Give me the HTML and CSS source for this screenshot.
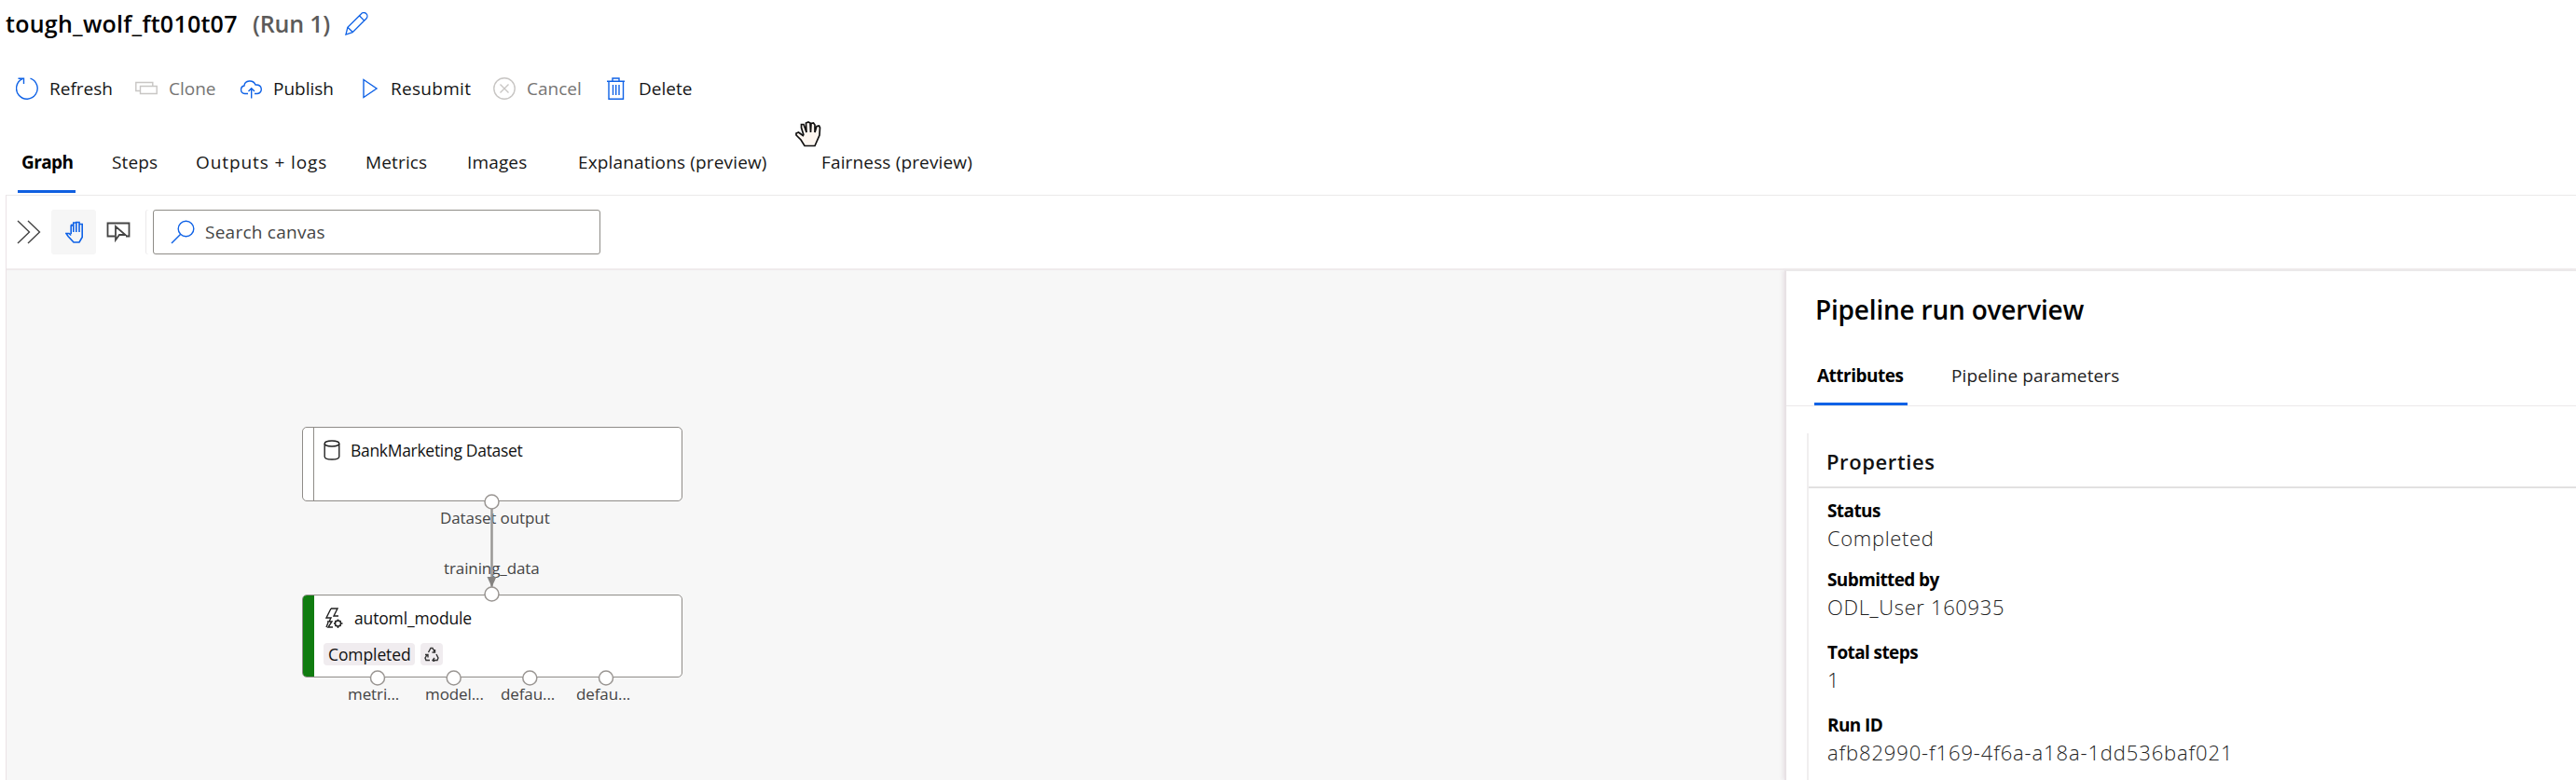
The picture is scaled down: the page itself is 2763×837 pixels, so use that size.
FILE: index.html
```html
<!DOCTYPE html>
<html lang="en">
<head>
<meta charset="utf-8">
<title>tough_wolf_ft010t07</title>
<link rel="stylesheet" href="styles.css">
</head>
<body>
<header class="run-title">
  <h1 class="run-name">tough_wolf_ft010t07</h1>
  <span class="run-number">(Run 1)</span>
  <svg class="edit-icon" viewBox="0 0 26 26"><path d="M1 25l2-8L18 2a3.500 3.500 0 0 1 6 5L8.500 22.500zM3 17l6 5.500M16 4l6 6"/></svg>
</header>

<nav class="commands">
  <button class="command"><svg class="icon" viewBox="0 0 24 24"><path d="M15.500 1.200a11.300 11.300 0 1 1-8.500.500M2.500 1.200H8.500V7"/></svg><span>Refresh</span></button>
  <button class="command disabled"><svg class="icon" viewBox="0 0 24 24"><path d="M5 14.500H.800v-9h18v4M5.500 9.500h17.700v8H5.500z"/></svg><span>Clone</span></button>
  <button class="command"><svg class="icon" viewBox="0 0 24 24"><path d="M9 17.500H5.500a4.300 4.300 0 0 1-.500-8.500C5.500 3 14.500 2 17 8c8-.500 8 9 2 9.500h-3M12.700 22.500V12M9.500 15l3.200-3.200L16 15"/></svg><span>Publish</span></button>
  <button class="command"><svg class="icon" viewBox="0 0 24 24"><path d="M7 2.500v19L21 12z"/></svg><span class="resubmit">Resubmit</span></button>
  <button class="command disabled"><svg class="icon" viewBox="0 0 24 24"><circle cx="12" cy="12" r="11.200"/><path d="M7.500 7.500l9 9M16.500 7.500l-9 9"/></svg><span>Cancel</span></button>
  <button class="command"><svg class="icon" viewBox="0 0 24 24"><path d="M2 4.200h19M4 4.200v19h15.500v-19M8 4V1h7v3M8.500 8v11M11.700 8v11M15 8v11"/></svg><span>Delete</span></button>
</nav>

<nav class="tabs">
  <a class="tab active">Graph</a>
  <a class="tab">Steps</a>
  <a class="tab outputs">Outputs + logs</a>
  <a class="tab">Metrics</a>
  <a class="tab">Images</a>
  <a class="tab">Explanations (preview)</a>
  <a class="tab">Fairness (preview)</a>
</nav>

<main class="workspace">
  <div class="canvas-tools">
    <svg class="expand" viewBox="0 0 26 26"><path d="M1 1l12.500 12L1 25M12 1l12.500 12L12 25"/></svg>
    <button class="tool selected"><svg class="hand" viewBox="0 0 20 24"><path d="M6.200 14V5.500Q6.200 4 7.700 4M6.200 4.500V14M6.200 5h2.600M8.800 12V2h3M11.800 12V1.500h3.200V12M15 3.500h3.200v14L15 23H9L3 16.500 1 13.500h3l2.200 2"/></svg></button>
    <button class="tool"><svg class="select" viewBox="0 0 26 22"><path d="M9 15.500H1.500V1.500h23v14H21M10 5v14.500l4-5.500h6.500z"/></svg></button>
    <div class="search">
      <svg viewBox="0 0 26 26"><circle cx="16.500" cy="9.500" r="8.300"/><path d="M10.500 15.500L1 25"/></svg>
      <span>Search canvas</span>
    </div>
  </div>

  <div class="stage">
    <section class="canvas">
      <div class="node dataset">
        <div class="node-strip"></div>
        <svg class="node-icon" viewBox="0 0 18 22"><ellipse cx="9" cy="4" rx="7.800" ry="3"/><path d="M1.200 4v14c0 4 15.600 4 15.600 0V4"/></svg>
        <span class="node-name">BankMarketing Dataset</span>
      </div>
      <div class="node module">
        <div class="node-strip done"></div>
        <div class="node-body">
          <div class="node-head">
            <svg class="module-icon" viewBox="0 0 20 22"><path d="M7 1h7l-4 8h5M7 1L2 11h5L5 15M3 15h5l-4 6h5M2 21l2-5"/><circle cx="14.500" cy="17" r="3"/><path d="M14.500 12.500v2M14.500 20v2M10 17h2M17.500 17h2M11.500 14l1 1M17.500 14l-1 1M11.500 20l1-1M17.500 20l-1-1"/></svg>
            <span class="node-name">automl_module</span>
          </div>
          <div class="chips">
            <span class="chip">Completed</span>
            <span class="chip small"><svg viewBox="0 0 16 16"><path d="M4.500 6L7 1.500h2l2.500 4.500M11.500 3v3H8.500M13 8l2 4-1 2.500H9M11 12l-2 2.500 2 1.500M6 14.500H2L1 12l2.500-4M1 8.500h3v3"/></svg></span>
          </div>
        </div>
      </div>
      <span class="port-label output">Dataset output</span>
      <span class="port-label input">training_data</span>
      <span class="port-label p1">metri...</span>
      <span class="port-label p2">model...</span>
      <span class="port-label p3">defau...</span>
      <span class="port-label p4">defau...</span>
      <svg class="edges" viewBox="0 0 500 330">
        <path class="edge" d="M217.500 56v84"/>
        <path class="arrow" d="M212.500 129h10l-5 11z"/>
        <g class="ports">
          <circle cx="217.500" cy="48.500" r="7.500"/><circle cx="217.500" cy="147.500" r="7.500"/>
          <circle cx="95" cy="237.500" r="7.500"/><circle cx="176.700" cy="237.500" r="7.500"/>
          <circle cx="258.300" cy="237.500" r="7.500"/><circle cx="340" cy="237.500" r="7.500"/>
        </g>
      </svg>
    </section>

    <aside class="overview">
      <h2 class="overview-title">Pipeline run overview</h2>
      <nav class="overview-tabs">
        <a class="overview-tab current">Attributes</a>
        <a class="overview-tab">Pipeline parameters</a>
      </nav>
      <section class="card">
        <h3 class="card-title">Properties</h3>
        <dl class="properties">
          <div class="property"><dt>Status</dt><dd>Completed</dd></div>
          <div class="property"><dt>Submitted by</dt><dd>ODL_User 160935</dd></div>
          <div class="property"><dt>Total steps</dt><dd>1</dd></div>
          <div class="property"><dt>Run ID</dt><dd class="run-id">afb82990-f169-4f6a-a18a-1dd536baf021</dd></div>
        </dl>
      </section>
    </aside>
  </div>
</main>

<svg class="cursor" viewBox="0 0 28 28"><path d="M9 15L6.500 7V3.500h2.500l3 8.500L11.500 2 14 1l2 1 .500 10L17 2.500l2.500-.500 1.500 2V12l2-6.500 2.500-.500 1 2-.500 8L21 26.500H10L6 20 1 15v-2l2.500-1L9 16"/></svg>
</body>
</html>
```

FILE: styles.css
```css
* { box-sizing: border-box; }

body {
  margin: 0;
  width: 2763px;
  height: 837px;
  overflow: hidden;
  background: #fff;
  color: #161616;
  font-family: "Open Sans", "Noto Sans", sans-serif;
  font-size: 19px;
  letter-spacing: 0;
  white-space: nowrap;
}

h1, h2, h3, dl, dd { margin: 0; }
button { padding: 0; border: 0; background: none; font: inherit; letter-spacing: inherit; color: inherit; }
svg { display: block; flex: none; fill: none; stroke: currentColor; stroke-width: 1.4; }

.run-title { display: flex; align-items: center; height: 50px; padding-left: 6px; font-size: 25px; font-weight: 600; }
.run-name { width: 265px; font-size: inherit; font-weight: 600; color: #000; letter-spacing: 0.25px; }
.run-number { width: 99px; color: #5c5b5a; font-weight: 600; letter-spacing: -0.2px; }
.edit-icon { width: 25px; height: 25px; color: #0f62e6; }

.commands { display: grid; grid-template-columns: 128px 112px 126px 146px 120px 130px; height: 90px; padding-left: 17px; align-items: center; }
.command { display: flex; align-items: center; gap: 12px; height: 26px; }
.resubmit { letter-spacing: 0.3px; }
.icon { width: 24px; height: 24px; color: #0f62e6; }
.disabled { color: #767574; }
.disabled .icon { color: #c8c6c4; }

.tabs { display: grid; grid-template-columns: 97px 90px 182px 109px 119px 261px 180px; height: 69px; padding: 19px 0 0 23px; letter-spacing: 0.15px; }
.tab { height: 48px; line-height: 30px; }
.outputs { letter-spacing: 0.9px; }
.tab.active { width: 62px; margin-left: -4px; padding-left: 4px; color: #000; font-weight: 700; letter-spacing: -0.6px; border-bottom: 3px solid #0f5fe0; }

.workspace { margin-left: 6px; border-top: 1px solid #ebe9ea; border-left: 1px solid #ebe2e6; }
.canvas-tools { display: flex; align-items: center; height: 78px; padding-left: 11px; color: #444; }
.expand { width: 26px; height: 26px; margin-right: 11px; }
.tool { display: grid; place-items: center; width: 48px; height: 48px; border-radius: 3px; }
.selected { background: #f6f6f6; color: #0f62e6; }
.hand { width: 20px; height: 24px; margin-left: 2px; stroke-width: 1.6; }
.select { width: 26px; height: 22px; stroke-width: 1.8; }
.search { display: flex; align-items: center; gap: 11px; width: 480px; height: 48px; margin-left: 13px; padding-left: 18px; letter-spacing: 0.25px; border: 1.500px solid #8e8c87; border-radius: 3px; box-shadow: -7px 0 0 0 #fff, -8px 0 0 0 #ebe9ea; }
.search svg { width: 26px; height: 26px; color: #0f62e6; }

.stage { display: flex; height: 549px; border-top: 2px solid #efebec; }
.canvas { position: relative; width: 1907px; height: 547px; background: #f7f7f7; }

.node { position: absolute; left: 317px; display: flex; width: 408px; background: #fff; border: 1.500px solid #8f8c88; border-radius: 5px; overflow: hidden; }
.dataset { top: 168px; height: 80px; }
.module { top: 348px; height: 89px; }
.node-strip { width: 12px; border-right: 1px solid #8f8c88; }
.node-strip.done { background: #107c10; border-color: #107c10; }
.node-icon { width: 18px; height: 22px; margin: 13px 11px 0 10px; color: #222; }
.node-name { font-size: 17.500px; line-height: 24px; font-weight: 500; color: #111; }
.dataset .node-name { margin-top: 12px; letter-spacing: -0.3px; }
.node-body { padding: 12px 0 0 10px; }
.node-head { display: flex; gap: 12px; align-items: center; padding-left: 1px; letter-spacing: -0.15px; }
.module-icon { width: 20px; height: 22px; color: #222; }
.chips { display: flex; gap: 6px; margin-top: 15px; }
.chip { width: 98px; height: 24px; padding-left: 5px; line-height: 25px; font-size: 17.500px; letter-spacing: -0.1px; color: #111; background: #f0ecef; border-radius: 4px; }
.chip.small { display: grid; place-items: center; width: 24px; padding: 0; color: #333; }
.chip svg { width: 16px; height: 16px; }

.port-label { position: absolute; font-size: 17px; line-height: 24px; letter-spacing: -0.1px; color: #444; }
.output { left: 465px; top: 254px; }
.input { left: 469px; top: 308px; }
.p1, .p2, .p3, .p4 { top: 443px; }
.p1 { left: 366px; }
.p2 { left: 449px; }
.p3 { left: 530px; }
.p4 { left: 611px; }
.edges { position: absolute; left: 303px; top: 200px; width: 500px; height: 330px; }
.edge { stroke: #9a9896; stroke-width: 2.500; }
.arrow { fill: #858381; stroke: none; }
.ports { fill: #fff; stroke: #9a9693; stroke-width: 1.500; }

.overview { flex: 1; background: #fff; border-top: 1px solid #ebe9ea; border-left: 2px solid #e8e2e5; box-shadow: -2px 0 4px #e9e4e7; z-index: 1; }
.overview-title { padding: 22px 0 0 31px; font-size: 28px; line-height: 39px; font-weight: 600; color: #000; letter-spacing: -0.2px; }
.overview-tabs { display: flex; height: 84px; padding: 38px 0 0 30px; border-bottom: 1px solid #ebe9ea; }
.overview-tab { height: 45px; line-height: 26px; color: #222; letter-spacing: 0.1px; }
.current { width: 100px; margin-right: 47px; padding-left: 3px; color: #000; font-weight: 700; letter-spacing: -0.5px; border-bottom: 3px solid #0f62e6; }
.card { margin: 29px 0 0 22px; height: 380px; border-left: 2px solid #f0eeef; }
.card-title { padding: 15px 0 12px 19px; font-size: 22px; line-height: 30px; font-weight: 600; color: #111; letter-spacing: 0.6px; border-bottom: 2px solid #e2e1e1; }
.properties { display: flex; flex-direction: column; gap: 20px; padding: 11px 0 0 20px; }
.property:first-child { margin-bottom: -4px; }
dt { font-size: 19px; line-height: 26px; font-weight: 700; color: #000; letter-spacing: -0.6px; }
dd { font-size: 22px; line-height: 32px; font-weight: 300; color: #222; letter-spacing: 0.65px; }
.run-id { letter-spacing: 0.87px; }

.cursor { position: absolute; left: 853px; top: 130px; width: 28px; height: 28px; color: #111; fill: #fdf6f0; stroke-width: 1.700; }
```
